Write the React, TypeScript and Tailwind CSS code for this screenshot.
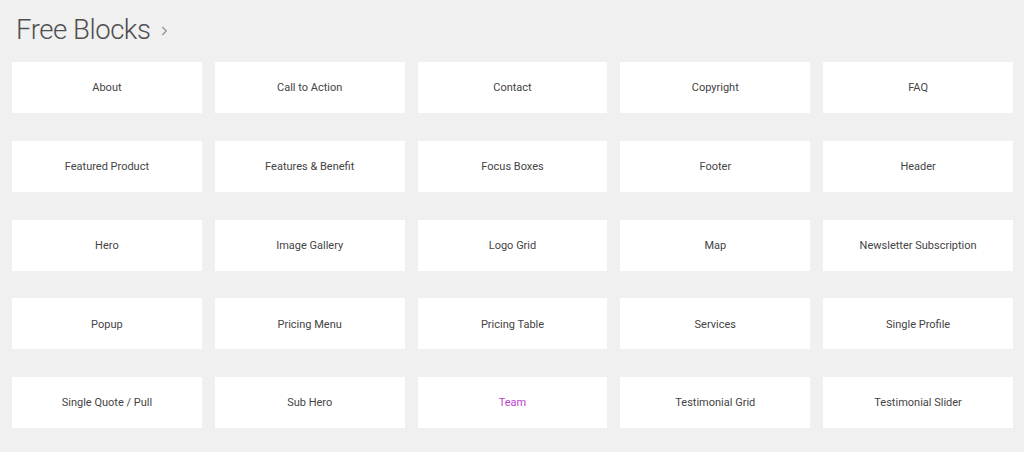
const blocks = [
  'About',
  'Call to Action',
  'Contact',
  'Copyright',
  'FAQ',
  'Featured Product',
  'Features & Benefit',
  'Focus Boxes',
  'Footer',
  'Header',
  'Hero',
  'Image Gallery',
  'Logo Grid',
  'Map',
  'Newsletter Subscription',
  'Popup',
  'Pricing Menu',
  'Pricing Table',
  'Services',
  'Single Profile',
  'Single Quote / Pull',
  'Sub Hero',
  'Team',
  'Testimonial Grid',
  'Testimonial Slider',
]

export default function App() {
  return (
    <div className="min-h-[452px] w-[1024px] bg-[#f0f0f0] pl-[12px] pr-[11px] font-['Roboto',sans-serif]">
      <div className="flex items-center h-[62px] pl-[4px] pb-[3px]">
        <h1 className="text-[27.5px] leading-none font-light tracking-[-0.45px] text-[#4f4f4f]">Free Blocks</h1>
        <svg className="ml-[11px] mt-[3px]" width="7" height="10" viewBox="0 0 7 10" fill="none">
          <path d="M1.3 1 L5.3 5 L1.3 9" stroke="#8f8f8f" strokeWidth="1.2" />
        </svg>
      </div>
      <div className="grid grid-cols-5 gap-x-[13px] gap-y-[27.75px]">
        {blocks.map(name => (
          <div
            key={name}
            className="h-[51px] bg-white flex items-center justify-center pt-[2px] text-[11px] cursor-pointer"
          >
            <span className={name === 'Team' ? 'text-[#bd3fcb]' : 'text-[#444444]'}>{name}</span>
          </div>
        ))}
      </div>
    </div>
  )
}
